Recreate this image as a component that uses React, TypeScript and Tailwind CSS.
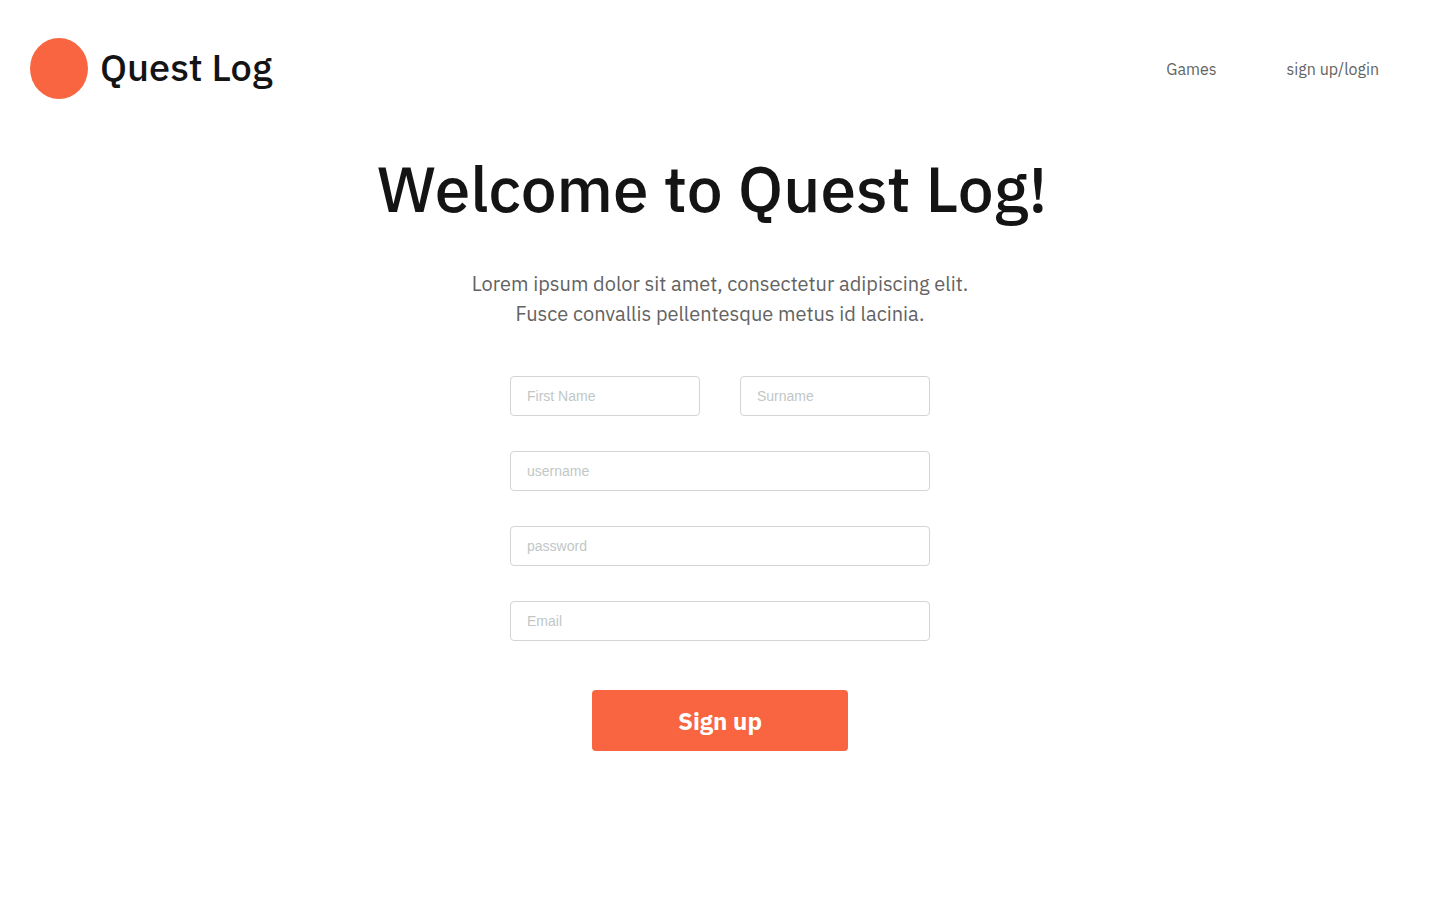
import React from "react";

type FieldProps = { name: string; label: string; type?: string };

function Field({ name, label, type = "text" }: FieldProps) {
  return (
    <input
      name={name}
      type={type}
      aria-label={label}
      placeholder={label}
      className="h-10 w-full min-w-0 rounded border border-[#d1d5d6] bg-white px-4 font-['Liberation_Sans',Arial,sans-serif] text-sm text-[#141414] placeholder:text-[#bfc7c7] focus:outline-2 focus:outline-[#f86540]"
    />
  );
}

export default function App() {
  return (
    <div className="min-h-screen bg-white font-['IBM_Plex_Sans','Noto_Sans',sans-serif] text-[#141414]">
      <header className="flex items-center justify-between pt-[38px] pr-[61px] pl-[30px]">
        <a href="#" className="flex items-start gap-3">
          <svg width="58" height="61" viewBox="0 0 58 61" aria-hidden="true">
            <ellipse cx="29" cy="30.5" rx="29" ry="30.5" fill="#f86540" />
          </svg>
          <span className="text-[38px] leading-[58px] font-medium">Quest Log</span>
        </a>
        <nav className="flex items-center gap-[70px] text-base text-[#636363]">
          <a href="#games">Games</a>
          <a href="#login">sign up/login</a>
        </nav>
      </header>
      <main className="flex flex-col items-center pt-[49px]">
        <h1 className="pr-4 text-[64px] leading-20 font-medium">Welcome to Quest Log!</h1>
        <p className="mt-[41px] max-w-[500px] text-center text-[20px] leading-[30px] text-[#636363]">
          Lorem ipsum dolor sit amet, consectetur adipiscing elit.
          <br />
          Fusce convallis pellentesque metus id lacinia.
        </p>
        <form className="mt-[47px] flex w-full max-w-[420px] flex-col gap-[35px]" onSubmit={(e) => e.preventDefault()}>
          <div className="grid grid-cols-2 gap-10">
            <Field name="firstName" label="First Name" />
            <Field name="surname" label="Surname" />
          </div>
          <Field name="username" label="username" />
          <Field name="password" label="password" type="password" />
          <Field name="email" label="Email" type="email" />
          <button type="submit" className="mt-[14px] h-[61px] w-64 self-center rounded bg-[#f86540] text-[24px] font-bold text-white">
            Sign up
          </button>
        </form>
      </main>
    </div>
  );
}
